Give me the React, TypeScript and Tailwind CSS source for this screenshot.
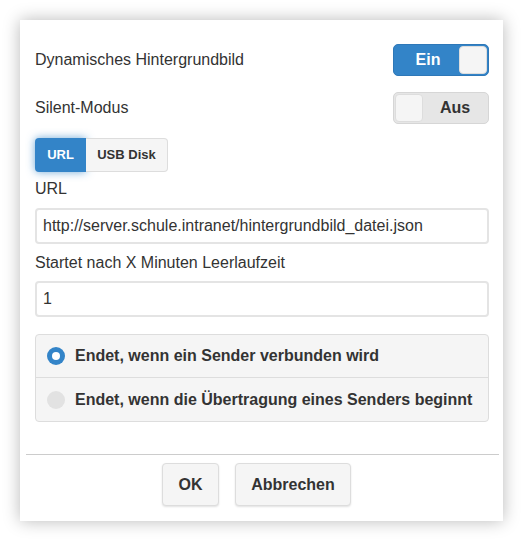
export default function App() {
  return (
    <div className="min-h-[541px] w-[523px] bg-white pt-5 pl-5 font-['Liberation_Sans',Arial,sans-serif] text-[#333]">
      <div className="w-[483px] h-[501px] bg-white shadow-[0_0_16px_rgba(0,0,0,0.28)] pl-[15px] pr-[14px] pt-6 flex flex-col">
        <div className="flex items-center justify-between h-8">
          <span className="text-[16px]">Dynamisches Hintergrundbild</span>
          <div className="flex items-center w-[96px] h-8 rounded-[5px] bg-[#3384c8] border border-[#2e78b8] pl-[3px] pr-[1px]">
            <span className="flex-1 text-center text-white font-bold text-[16px]">Ein</span>
            <span className="w-[28px] h-[28px] rounded-[4px] bg-[#f5f5f5] border border-[#ddd]" />
          </div>
        </div>
        <div className="flex items-center justify-between h-8 mt-4">
          <span className="text-[16px]">Silent-Modus</span>
          <div className="flex items-center w-[96px] h-8 rounded-[5px] bg-[#e6e6e6] border border-[#d6d6d6] pl-[1px] pr-[1px]">
            <span className="w-[28px] h-[28px] rounded-[4px] bg-[#f5f5f5] border border-[#ddd]" />
            <span className="flex-1 text-center font-bold text-[16px] text-[#333]">Aus</span>
          </div>
        </div>
        <div className="flex mt-[14px] h-[34px]">
          <div className="w-[51px] flex items-center justify-center rounded-l-[4px] bg-[#3384c8] text-white text-[13px] font-bold shadow-[0_0_8px_rgba(51,132,200,0.7)]">
            URL
          </div>
          <div className="w-[82px] flex items-center justify-center rounded-r-[4px] bg-[#f5f5f5] border border-l-0 border-[#ddd] text-[13px] font-bold">
            USB Disk
          </div>
        </div>
        <label className="mt-[6px] text-[16px] leading-[22px]">URL</label>
        <div className="mt-[8px] h-[36px] rounded-[4px] border-2 border-[#e4e4e4] px-[6px] flex items-center text-[16px]">
          http://server.schule.intranet/hintergrundbild_datei.json
        </div>
        <label className="mt-[8px] text-[16px] leading-[22px]">Startet nach X Minuten Leerlaufzeit</label>
        <div className="mt-[7px] h-[36px] rounded-[4px] border-2 border-[#e4e4e4] px-[6px] flex items-center text-[16px]">
          1
        </div>
        <div className="mt-[17px] rounded-[4px] border border-[#ddd] bg-[#f5f5f5]">
          <div className="h-[43px] flex items-center gap-[10px] px-[11px] border-b border-[#ddd]">
            <span className="w-[18px] h-[18px] rounded-full bg-[#3384c8] flex items-center justify-center">
              <span className="w-[8px] h-[8px] rounded-full bg-white" />
            </span>
            <span className="font-bold text-[16px]">Endet, wenn ein Sender verbunden wird</span>
          </div>
          <div className="h-[43px] flex items-center gap-[10px] px-[11px]">
            <span className="w-[18px] h-[18px] rounded-full bg-[#e2e2e2]" />
            <span className="font-bold text-[16px]">Endet, wenn die Übertragung eines Senders beginnt</span>
          </div>
        </div>
        <div className="mt-[32px] -ml-[9px] -mr-[10px] border-t border-[#ccc]" />
        <div className="flex justify-center gap-4 mt-2 pr-[11px]">
          <button className="w-[57px] h-[43px] rounded-[4px] bg-[#f5f5f5] border border-[#ddd] shadow-[0_1px_2px_rgba(0,0,0,0.12)] font-bold text-[16px]">
            OK
          </button>
          <button className="w-[116px] h-[43px] rounded-[4px] bg-[#f5f5f5] border border-[#ddd] shadow-[0_1px_2px_rgba(0,0,0,0.12)] font-bold text-[16px]">
            Abbrechen
          </button>
        </div>
      </div>
    </div>
  );
}
